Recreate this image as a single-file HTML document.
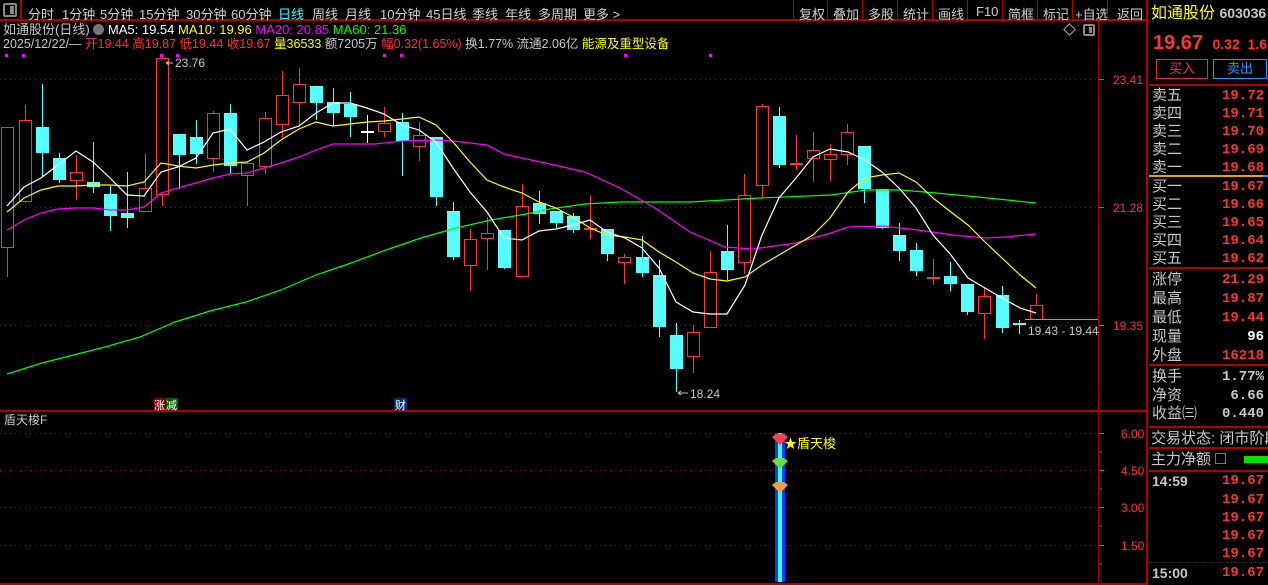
<!DOCTYPE html>
<html><head><meta charset="utf-8"><style>
*{margin:0;padding:0;box-sizing:border-box}
body{width:1268px;height:585px;background:#000;overflow:hidden;position:relative;font-family:"Liberation Sans","Noto Sans CJK SC",sans-serif;font-size:13px;color:#c8c8c8}
.a{position:absolute;white-space:nowrap;line-height:1}
.tb span{position:absolute;top:4px;font-size:13px;color:#d0d0d0}
.r{color:#ff3333}.y{color:#ffff00}.m{color:#ff00ff}.g{color:#00ff00}.w{color:#fff}.c{color:#33ffff}
.rp{position:absolute;left:1152px;font-size:15px;color:#c8c8c8;line-height:1;white-space:nowrap}
.rv{position:absolute;right:4px;font-size:14px;font-weight:bold;color:#ff3333;line-height:1;font-family:"Liberation Mono",monospace}
.hl{position:absolute;left:1149px;width:119px;height:2px;background:#b00000}
</style></head><body>
<!-- toolbar -->
<div class="a" style="left:0;top:0;width:1149px;height:21px;border-bottom:2px solid #b00000"></div>
<div class="a" style="left:3px;top:3px;width:14px;height:14px;border:2px solid #888;border-radius:2px"></div>
<div class="a" style="left:10px;top:6px;width:4px;height:8px;background:#888"></div>
<div class="a" style="left:20px;top:0;width:2px;height:21px;background:#b00000"></div>
<div class="tb">
<span style="left:28px">分时</span><span style="left:62px">1分钟</span><span style="left:100px">5分钟</span><span style="left:139px">15分钟</span><span style="left:186px">30分钟</span><span style="left:231px">60分钟</span><span style="left:278px;color:#33ffff">日线</span><span style="left:312px">周线</span><span style="left:345px">月线</span><span style="left:380px">10分钟</span><span style="left:426px">45日线</span><span style="left:472px">季线</span><span style="left:505px">年线</span><span style="left:538px">多周期</span><span style="left:583px">更多 &gt;</span>
<span style="left:799px">复权</span><span style="left:833px">叠加</span><span style="left:868px">多股</span><span style="left:903px">统计</span><span style="left:938px">画线</span><span style="left:976px">F10</span><span style="left:1008px">简框</span><span style="left:1043px">标记</span><span style="left:1075px">+自选</span><span style="left:1117px">返回</span>
</div>
<div class="a" style="left:793px;top:0;width:1px;height:20px;background:#b00000"></div>
<div class="a" style="left:827px;top:0;width:1px;height:20px;background:#b00000"></div>
<div class="a" style="left:862px;top:0;width:1px;height:20px;background:#b00000"></div>
<div class="a" style="left:897px;top:0;width:1px;height:20px;background:#b00000"></div>
<div class="a" style="left:932px;top:0;width:1px;height:20px;background:#b00000"></div>
<div class="a" style="left:967px;top:0;width:1px;height:20px;background:#b00000"></div>
<div class="a" style="left:1002px;top:0;width:1px;height:20px;background:#b00000"></div>
<div class="a" style="left:1037px;top:0;width:1px;height:20px;background:#b00000"></div>
<div class="a" style="left:1072px;top:0;width:1px;height:20px;background:#b00000"></div>
<div class="a" style="left:1107px;top:0;width:1px;height:20px;background:#b00000"></div>
<!-- info rows -->
<div class="a" style="left:3px;top:23px;font-size:13px">如通股份(日线) <span style="display:inline-block;width:11px;height:11px;border-radius:50%;background:#777;vertical-align:-1px"></span> <span class="w">MA5: 19.54</span> <span class="y">MA10: 19.96</span> <span class="m">MA20: 20.85</span> <span class="g">MA60: 21.36</span></div>
<div class="a" style="left:3px;top:38px;font-size:12.5px">2025/12/22/— <span class="r">开19.44 高19.87 低19.44 收19.67</span> <span class="y">量36533</span> 额7205万 <span class="r">幅0.32(1.65%)</span> 换1.77% 流通2.06亿 <span class="y">能源及重型设备</span></div>
<div class="a" style="left:1065px;top:25px;width:9px;height:9px;border:1px solid #aaa;transform:rotate(45deg)"></div>
<div class="a" style="left:1083px;top:24px;width:12px;height:12px;border:2px solid #888;border-radius:2px"></div>
<div class="a" style="left:1089px;top:27px;width:3px;height:6px;background:#888"></div>
<!-- chart svg -->
<svg class="a" style="left:0;top:0" width="1149" height="585" id="sv">
<g stroke="#b00000" stroke-dasharray="1,4" stroke-width="1">
<line x1="0" y1="79.5" x2="1098" y2="79.5"/><line x1="0" y1="207.5" x2="1098" y2="207.5"/><line x1="0" y1="325.5" x2="1098" y2="325.5"/>
<line x1="0" y1="433.5" x2="1098" y2="433.5"/><line x1="0" y1="470.5" x2="1098" y2="470.5"/><line x1="0" y1="507.5" x2="1098" y2="507.5"/><line x1="0" y1="545.5" x2="1098" y2="545.5"/>
</g>
<line x1="1098.5" y1="21" x2="1098.5" y2="585" stroke="#b00000"/>
<line x1="1147" y1="0" x2="1147" y2="585" stroke="#b00000" stroke-width="2"/>
<line x1="0" y1="411" x2="1147" y2="411" stroke="#b00000" stroke-width="2"/>
<line x1="0" y1="584" x2="1147" y2="584" stroke="#b00000" stroke-width="2"/>
<g stroke="#ff3333"><line x1="1099" y1="79.5" x2="1104" y2="79.5"/><line x1="1099" y1="207.5" x2="1104" y2="207.5"/><line x1="1099" y1="325.5" x2="1104" y2="325.5"/><line x1="1099" y1="433.5" x2="1104" y2="433.5"/><line x1="1099" y1="470.5" x2="1104" y2="470.5"/><line x1="1099" y1="507.5" x2="1104" y2="507.5"/><line x1="1099" y1="545.5" x2="1104" y2="545.5"/><line x1="1099" y1="452" x2="1102" y2="452"/><line x1="1099" y1="489" x2="1102" y2="489"/><line x1="1099" y1="526" x2="1102" y2="526"/><line x1="1099" y1="564" x2="1102" y2="564"/></g>
<g fill="#ff3333" font-size="12" font-family="Liberation Sans,sans-serif">
<text x="1113" y="84">23.41</text><text x="1113" y="212">21.28</text><text x="1113" y="330">19.35</text>
<text x="1121" y="438">6.00</text><text x="1121" y="475">4.50</text><text x="1121" y="512">3.00</text><text x="1121" y="550">1.50</text>
</g>
<g fill="#ff00ff"><rect x="5" y="54" width="3" height="3"/><rect x="22" y="54" width="3" height="3"/><rect x="160" y="54" width="3" height="3"/><rect x="176" y="54" width="3" height="3"/><rect x="383" y="54" width="3" height="3"/><rect x="400" y="54" width="3" height="3"/><rect x="624" y="54" width="3" height="3"/><rect x="709" y="54" width="3" height="3"/></g>
<g id="cd"></g>
<g fill="none" stroke-width="1.2">
<polyline stroke="#00ff00" points="7,374 42,363 105,347 140,337 175,322 210,311 246,302 281,290 316,275 351,263 386,250 421,238 456,228 491,220 526,214 550,209 585,204 620,202 690,202 760,198 831,195 866,190 901,190 936,193 988,198 1036,203"/>
<polyline stroke="#ff00ff" points="7,230 24,220 41,213 58,209 76,208 93,208 110,210 127,210 144,207 161,193 178,188 196,183 213,178 230,174 247,173 264,168 281,163 299,157 316,150 333,144 375,144 402,141 436,140 453,141 487,145 504,154 522,158 550,164 585,172 620,188 655,208 690,232 725,247 753,249 796,243 831,233 848,227 883,226 918,230 953,235 985,238 1006,237 1036,234"/>
<polyline stroke="#ffff00" points="7,212 24,198 41,190 58,186 76,186 93,185 110,185 127,186 144,182 161,163 178,166 196,168 213,165 230,163 247,162 264,153 281,140 299,129 316,122 333,126 350,124 367,122 384,121 402,119 419,117 436,125 453,142 470,162 487,180 504,187 522,193 539,202 556,208 573,217 590,228 607,235 625,237 642,240 659,252 676,262 693,273 710,279 727,281 745,277 762,265 779,255 796,245 813,235 830,218 848,192 865,178 882,175 899,173 916,182 933,198 951,212 968,225 985,242 1002,258 1020,275 1036,288"/>
<polyline stroke="#ffffff" points="7,206 24,187 41,178 58,165 76,151 93,162 110,178 127,195 144,196 161,172 178,167 196,158 213,133 230,129 247,150 264,142 281,132 299,126 316,113 333,103 350,103 367,108 384,114 402,125 419,130 436,142 453,168 470,192 487,212 504,238 522,240 539,231 556,229 573,225 590,220 607,232 625,238 642,248 659,268 676,302 693,312 710,314 727,314 745,285 762,235 779,198 796,178 813,157 830,149 848,152 865,160 882,172 899,188 916,208 933,235 951,255 968,278 985,288 1002,298 1020,308 1036,313"/>
</g>
<line x1="1025" y1="319.5" x2="1098" y2="319.5" stroke="#999"/>
<g fill="#c8c8c8" font-size="12" font-family="Liberation Sans,sans-serif">
<text x="175" y="67">23.76</text><text x="690" y="398">18.24</text><text x="1028" y="335">19.43 - 19.44</text></g>
<g stroke="#c8c8c8" fill="none"><path d="M173,63 L166,63 M166,63 l3,-2 M166,63 l3,2"/><path d="M688,393 L678,393 M678,393 l3,-2 M678,393 l3,2"/></g>
<rect x="154" y="398" width="12" height="12" fill="#800000"/><rect x="166" y="398" width="12" height="12" fill="#006000"/>
<rect x="394" y="398" width="13" height="12" fill="#003070"/>
<g font-size="11" fill="#fff" font-family="Noto Sans CJK SC,sans-serif"><text x="154" y="409">涨</text><text x="166" y="409">减</text><text x="395" y="409">财</text></g>
<text x="4" y="424" font-size="12" fill="#c8c8c8" font-family="Liberation Sans,Noto Sans CJK SC,sans-serif">盾天梭F</text>
<rect x="775" y="433" width="10" height="149" fill="#0040ff"/>
<rect x="778" y="433" width="4" height="149" fill="#33ffff"/>
<path d="M772,437 l4,-3 h8 l4,3 l-8,8 z" fill="#ff4050"/>
<path d="M772,461 l4,-3 h8 l4,3 l-8,8 z" fill="#66dd44"/>
<path d="M772,485 l4,-3 h8 l4,3 l-8,8 z" fill="#f0a040"/>
<text x="784" y="448" font-size="13" fill="#ffff00" font-family="Liberation Sans,Noto Sans CJK SC,sans-serif">★盾天梭</text>
</svg>
<!-- right panel -->
<div class="a" style="left:1151px;top:6px;font-size:16px;color:#ffff00">如通股份 <span style="color:#c8c8c8;font-weight:bold;font-size:14px">603036</span></div>
<div class="a" style="left:1153px;top:33px;font-size:20px;font-weight:bold;color:#ff3333">19.67 <span style="font-size:14px">&nbsp;0.32 &nbsp;1.65%</span></div>
<div class="a" style="left:1156px;top:59px;width:52px;height:20px;border:1px solid #e03030;color:#ff3333;font-size:13px;text-align:center;line-height:18px">买入</div>
<div class="a" style="left:1213px;top:59px;width:54px;height:20px;border:1px solid #3090ff;color:#3090ff;font-size:13px;text-align:center;line-height:18px">卖出</div>
<div class="hl" style="top:84px"></div>
<div class="rp" style="top:88px">卖五</div><div class="rv" style="top:89px">19.72</div>
<div class="rp" style="top:106px">卖四</div><div class="rv" style="top:107px">19.71</div>
<div class="rp" style="top:124px">卖三</div><div class="rv" style="top:125px">19.70</div>
<div class="rp" style="top:142px">卖二</div><div class="rv" style="top:143px">19.69</div>
<div class="rp" style="top:160px">卖一</div><div class="rv" style="top:161px">19.68</div>
<div class="a" style="left:1149px;top:175px;width:114px;height:2px;background:#e0a020"></div><div class="a" style="left:1263px;top:175px;width:5px;height:2px;background:#3090ff"></div>
<div class="rp" style="top:179px">买一</div><div class="rv" style="top:180px">19.67</div>
<div class="rp" style="top:197px">买二</div><div class="rv" style="top:198px">19.66</div>
<div class="rp" style="top:215px">买三</div><div class="rv" style="top:216px">19.65</div>
<div class="rp" style="top:233px">买四</div><div class="rv" style="top:234px">19.64</div>
<div class="rp" style="top:251px">买五</div><div class="rv" style="top:252px">19.62</div>
<div class="hl" style="top:267px"></div>
<div class="rp" style="top:272px">涨停</div><div class="rv" style="top:273px">21.29</div>
<div class="rp" style="top:291px">最高</div><div class="rv" style="top:292px">19.87</div>
<div class="rp" style="top:310px">最低</div><div class="rv" style="top:311px">19.44</div>
<div class="rp" style="top:329px">现量</div><div class="rv" style="top:330px;color:#fff">96</div>
<div class="rp" style="top:348px">外盘</div><div class="rv" style="top:349px">16218</div>
<div class="hl" style="top:364px"></div>
<div class="rp" style="top:369px">换手</div><div class="rv" style="top:370px;color:#c8c8c8">1.77%</div>
<div class="rp" style="top:388px">净资</div><div class="rv" style="top:389px;color:#c8c8c8">6.66</div>
<div class="rp" style="top:406px">收益㈢</div><div class="rv" style="top:407px;color:#c8c8c8">0.440</div>
<div class="hl" style="top:426px"></div>
<div class="a" style="left:1149px;top:428px;width:119px;height:18px;overflow:hidden"><div class="rp" style="top:3px;left:2px">交易状态: 闭市阶段</div></div>
<div class="hl" style="top:447px"></div>
<div class="rp" style="top:452px;left:1151px">主力净额 <span style="display:inline-block;width:11px;height:11px;border:1px solid #777;vertical-align:0"></span></div>
<div class="a" style="left:1244px;top:456px;width:24px;height:7px;background:#00e000"></div>
<div class="hl" style="top:470px"></div>
<div class="a" style="left:1152px;top:474px;font-size:14px;font-weight:bold;color:#c8c8c8">14:59</div>
<div class="rv" style="top:474px">19.67</div><div class="rv" style="top:493px">19.67</div><div class="rv" style="top:511px">19.67</div><div class="rv" style="top:529px">19.67</div><div class="rv" style="top:547px">19.67</div>
<div class="a" style="left:1149px;top:562px;width:119px;border-top:1px dotted #c00000"></div>
<div class="a" style="left:1152px;top:566px;font-size:14px;font-weight:bold;color:#c8c8c8">15:00</div><div class="rv" style="top:566px">19.67</div>
<script>
var D=[["r",127,247,127,277],["r",120,201,105,203],["c",127,153,84,177],["c",158,180,153,183],["r",172,180,155,200],["c",182,187,142,193],["c",194,216,186,231],["c",213,218,172,228],["r",188,211,154,211],["r",58,194,58,206],["c",134,155,134,189],["c",137,154,120,164],["r",113,158,111,172],["c",113,166,104,174],["r",163,175,161,206],["r",118,166,112,174],["r",95,124,71,138],["r",84,102,68,127],["c",86,103,86,120],["c",102,113,88,126],["c",104,117,92,137],["w",131,132,115,143],["r",123,131,107,137],["c",122,141,113,176],["r",135,146,122,161],["c",137,197,137,206],["c",211,257,202,260],["r",239,265,229,291],["r",233,238,217,270],["c",230,268,230,269],["r",206,276,184,276],["c",203,214,191,224],["c",211,223,211,228],["c",216,230,213,233],["x",228,230,195,239],["c",229,254,229,261],["r",257,262,254,284],["c",257,273,236,277],["c",275,327,260,337],["c",335,369,323,392],["r",332,356,325,373],["r",272,327,251,327],["c",251,270,225,280],["r",195,262,174,274],["r",106,185,104,198],["c",116,165,107,168],["x",163,165,135,170],["r",150,158,132,182],["r",154,159,144,181],["r",132,154,124,165],["c",146,189,146,203],["c",189,228,189,229],["c",235,251,223,261],["c",250,271,243,276],["x",277,279,259,285],["c",276,284,262,291],["c",284,312,284,315],["r",296,313,288,339],["c",295,328,286,333],["y",323,325,320,334],["r",305,319,294,319]];
var s="";for(var i=0;i<D.length;i++){var d=D[i],x=Math.round(7.4+17.14*i),t=d[0];
var col=t=="c"||t=="y"?"#55ffff":t=="w"?"#ffffff":"#ff3333";
s+='<line x1="'+(x+.5)+'" y1="'+d[3]+'" x2="'+(x+.5)+'" y2="'+d[4]+'" stroke="'+col+'"/>';
if(t=="r")s+='<rect x="'+(x-5.5)+'" y="'+(d[1]+.5)+'" width="12" height="'+Math.max(1,d[2]-d[1])+'" fill="#000" stroke="#ff3333"/>';
else if(t=="c")s+='<rect x="'+(x-6)+'" y="'+d[1]+'" width="13" height="'+Math.max(1,d[2]-d[1])+'" fill="#55ffff"/>';
else s+='<rect x="'+(x-6)+'" y="'+d[1]+'" width="13" height="2" fill="'+col+'"/>';}
document.getElementById("cd").innerHTML=s;
</script>
</body></html>
